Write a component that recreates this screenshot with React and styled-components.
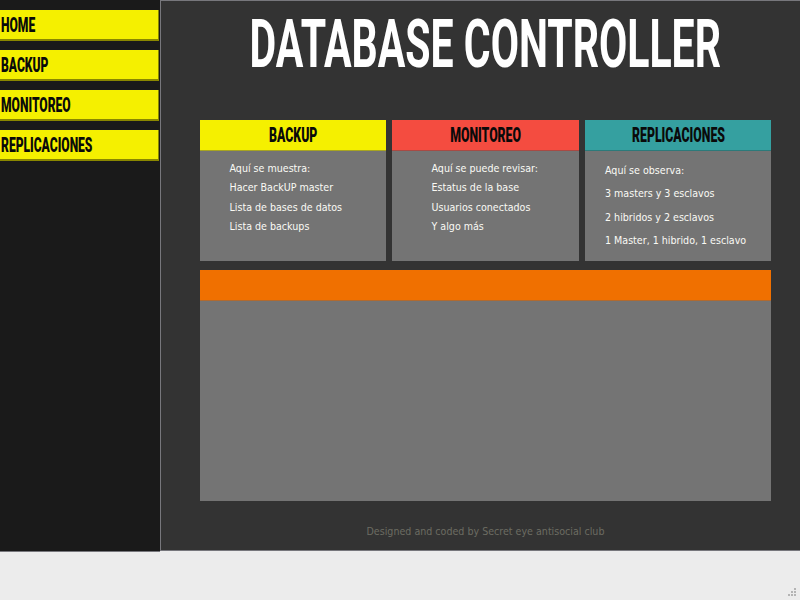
import styled, { createGlobalStyle } from "styled-components";

const GlobalStyle = createGlobalStyle`
  html, body {
    margin: 0;
    padding: 0;
    background: #ececec;
  }
`;

const display = `"Roboto", "Liberation Sans", sans-serif`;
const copy = `"DejaVu Sans Condensed", "DejaVu Sans", sans-serif`;

const Page = styled.div`
  position: relative;
  width: 800px;
  height: 600px;
  overflow: hidden;
`;

const Shell = styled.div`
  display: flex;
  align-items: flex-start;
  height: 552px;
`;

const Sidebar = styled.nav`
  box-sizing: border-box;
  width: 160px;
  height: 552px;
  padding-top: 10px;
  background: #1a1a1a;
  border-bottom: 1px solid #77777c;
  display: flex;
  flex-direction: column;
  gap: 9px;
`;

const MenuItem = styled.a`
  box-sizing: border-box;
  display: block;
  width: 159px;
  height: 31px;
  padding-left: 1px;
  background: #f5f000;
  border-right: 1px solid #8a8700;
  border-bottom: 2px solid #8a8700;
  color: #0a0a0a;
  font: 900 21px/30px ${display};
  white-space: nowrap;
`;

/* no Bebas Neue here, so squeeze the Roboto caps to its width */
const Squeezed = styled.span`
  display: inline-block;
  transform: scaleX(${(p) => p.$x});
  transform-origin: ${(p) => p.$origin || "center"};
`;

const Main = styled.main`
  box-sizing: border-box;
  width: 640px;
  height: 551px;
  background: #333333;
  border-top: 1px solid #77777c;
  border-left: 1px solid #77777c;
  border-bottom: 1px solid #77777c;
  padding: 0 29px 0 39px;
`;

const Title = styled.h1`
  box-sizing: border-box;
  display: flex;
  justify-content: center;
  margin: 0;
  height: 119px;
  padding-top: 4px;
  color: #ffffff;
  font: 700 67px/78px ${display};
  white-space: nowrap;
`;

const Cards = styled.div`
  display: grid;
  grid-template-columns: 186px 187px 186px;
  gap: 6px;
`;

const Card = styled.section`
  height: 141px;
  background: #747474;
`;

const CardHeader = styled.h2`
  box-sizing: border-box;
  margin: 0;
  height: 31px;
  background: ${(p) => p.$color};
  border-bottom: 1px solid ${(p) => p.$edge};
  color: #0a0a0a;
  text-align: center;
  font: 900 21px/30px ${display};
`;

const CardBody = styled.div`
  padding: ${(p) => p.$top}px 0 0 ${(p) => p.$left}px;
  color: #fafaf4;
  font: 10.6px/${(p) => p.$line}px ${copy};
`;

const Line = styled.div`
  white-space: nowrap;
`;

const Panel = styled.section`
  height: 231px;
  margin-top: 9px;
  background: #747474;
`;

const PanelHeader = styled.div`
  box-sizing: border-box;
  height: 31px;
  background: #f07000;
  border-bottom: 1px solid #b06a30;
`;

const Credit = styled.footer`
  margin-top: 22px;
  text-align: center;
  color: #6c6c62;
  font: 10.6px/16px ${copy};
`;

const Grip = styled.svg`
  position: absolute;
  right: 3px;
  bottom: 3px;
`;

const cards = [
  {
    title: "BACKUP",
    color: "#f5f000",
    edge: "#a8a520",
    top: 7.5,
    left: 29.5,
    line: 19.5,
    lines: ["Aquí se muestra:", "Hacer BackUP master", "Lista de bases de datos", "Lista de backups"],
  },
  {
    title: "MONITOREO",
    color: "#f44c40",
    edge: "#a84a44",
    top: 7.5,
    left: 39.5,
    line: 19.5,
    lines: ["Aquí se puede revisar:", "Estatus de la base", "Usuarios conectados", "Y algo más"],
  },
  {
    title: "REPLICACIONES",
    color: "#35a0a0",
    edge: "#2c7a7a",
    top: 7.5,
    left: 20,
    line: 23.5,
    lines: ["Aquí se observa:", "3 masters y 3 esclavos", "2 hibridos y 2 esclavos", "1 Master, 1 hibrido, 1 esclavo"],
  },
];

const menu = ["HOME", "BACKUP", "MONITOREO", "REPLICACIONES"];

const App = () => (
  <Page>
    <GlobalStyle />
    <Shell>
      <Sidebar>
        {menu.map((item) => (
          <MenuItem key={item}>
            <Squeezed $x={0.575} $origin="left">{item}</Squeezed>
          </MenuItem>
        ))}
      </Sidebar>
      <Main>
        <Title>
          <Squeezed $x={0.612}>DATABASE CONTROLLER</Squeezed>
        </Title>
        <Cards>
          {cards.map((card) => (
            <Card key={card.title}>
              <CardHeader $color={card.color} $edge={card.edge}>
                <Squeezed $x={0.585}>{card.title}</Squeezed>
              </CardHeader>
              <CardBody $top={card.top} $left={card.left} $line={card.line}>
                {card.lines.map((line) => (
                  <Line key={line}>{line}</Line>
                ))}
              </CardBody>
            </Card>
          ))}
        </Cards>
        <Panel>
          <PanelHeader />
        </Panel>
        <Credit>Designed and coded by Secret eye antisocial club</Credit>
      </Main>
    </Shell>
    <Grip width="9" height="9" viewBox="0 0 9 9" fill="#b4b4b4">
      <rect x="6" y="0" width="2" height="2" />
      <rect x="3" y="3" width="2" height="2" />
      <rect x="6" y="3" width="2" height="2" />
      <rect x="0" y="6" width="2" height="2" />
      <rect x="3" y="6" width="2" height="2" />
      <rect x="6" y="6" width="2" height="2" />
    </Grip>
  </Page>
);

export default App;
